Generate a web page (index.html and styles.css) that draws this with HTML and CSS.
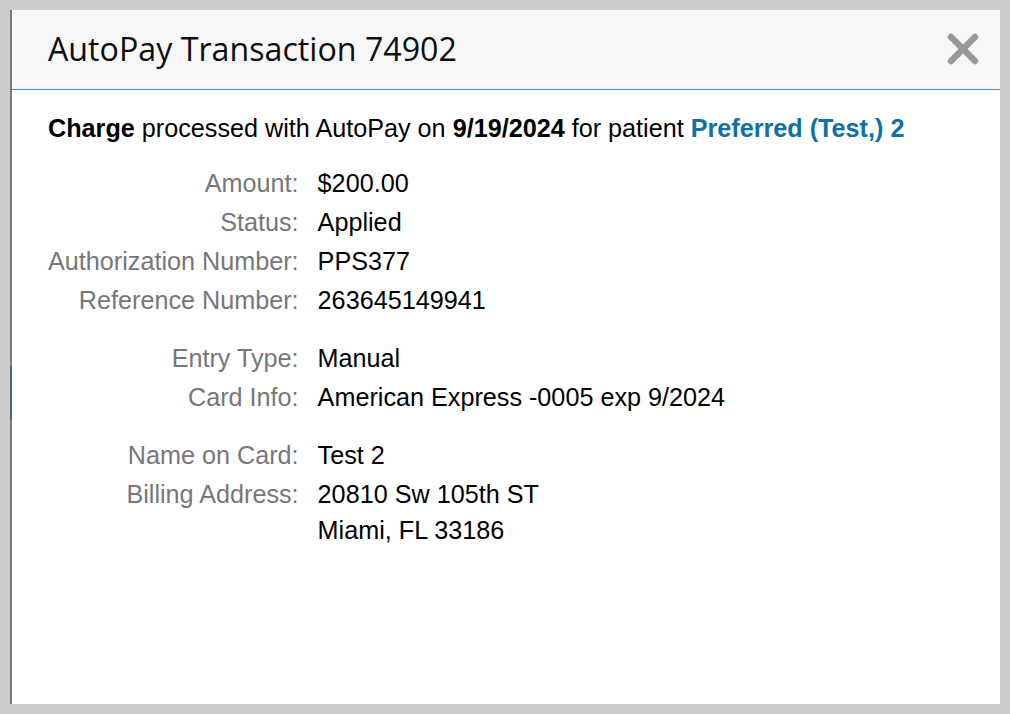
FILE: index.html
```html
<!DOCTYPE html>
<html lang="en">
<head>
<meta charset="utf-8">
<title>AutoPay Transaction 74902</title>
<link rel="stylesheet" href="styles.css">
</head>
<body>
<div class="backdrop-sliver"></div>
<div class="modal">
  <div class="modal-header">
    <h1 class="modal-title">AutoPay Transaction 74902</h1>
    <button class="close-btn" aria-label="Close">
      <svg width="32" height="32" viewBox="0 0 32 32">
        <line x1="4" y1="4" x2="28" y2="28" stroke="#999" stroke-width="6.5" stroke-linecap="round"/>
        <line x1="28" y1="4" x2="4" y2="28" stroke="#999" stroke-width="6.5" stroke-linecap="round"/>
      </svg>
    </button>
  </div>
  <div class="modal-body">
    <p class="summary"><b>Charge</b> processed with AutoPay on <b>9/19/2024</b> for patient <a class="patient-link" href="#">Preferred (Test,) 2</a></p>
    <div class="details">
      <div class="label">Amount:</div><div class="value">$200.00</div>
      <div class="label">Status:</div><div class="value">Applied</div>
      <div class="label">Authorization Number:</div><div class="value">PPS377</div>
      <div class="label">Reference Number:</div><div class="value">263645149941</div>
      <div class="label group-start">Entry Type:</div><div class="value group-start">Manual</div>
      <div class="label">Card Info:</div><div class="value">American Express -0005 exp 9/2024</div>
      <div class="label group-start">Name on Card:</div><div class="value group-start">Test 2</div>
      <div class="label">Billing Address:</div><div class="value">20810 Sw 105th ST<br>Miami, FL 33186</div>
    </div>
  </div>
</div>
</body>
</html>
```

FILE: styles.css
```css
html, body {
  margin: 0;
  height: 100%;
}
body {
  background: #cccccc;
  padding: 10px 10px 10px 10px;
  box-sizing: border-box;
  font-family: "Liberation Sans", Arial, sans-serif;
  position: relative;
}
.backdrop-sliver {
  position: absolute;
  left: 10px;
  top: 366px;
  width: 2px;
  height: 54px;
  background: #4c6576;
  z-index: 2;
}
.modal {
  height: 694px;
  background: #ffffff;
  border-left: 2px solid #7a7a7a;
  box-sizing: border-box;
}
.modal-header {
  height: 80px;
  box-sizing: border-box;
  background: #f7f7f7;
  border-bottom: 1px solid #3c8dc5;
  display: flex;
  align-items: center;
  justify-content: space-between;
  padding: 0 21px 0 36px;
}
.modal-title {
  margin: 0;
  font-family: "Open Sans", sans-serif;
  font-weight: 400;
  font-size: 32.2px;
  color: #0d0d0d;
  line-height: 1;
}
.close-btn {
  border: 0;
  background: none;
  padding: 0;
  width: 32px;
  height: 32px;
  display: block;
  margin-top: -2px;
}
.close-btn svg {
  display: block;
}
.modal-body {
  padding: 20px 36px 0 36px;
  font-size: 25.2px;
  line-height: 36px;
  color: #000000;
}
.summary {
  margin: 0 0 19px 0;
}
.patient-link {
  color: #0f6fa8;
  font-weight: 700;
  text-decoration: none;
}
.details {
  display: grid;
  grid-template-columns: max-content 1fr;
  column-gap: 19px;
  row-gap: 3px;
}
.label {
  color: #777777;
  text-align: right;
}
.value {
  color: #000000;
}
.group-start {
  padding-top: 19px;
}
```
